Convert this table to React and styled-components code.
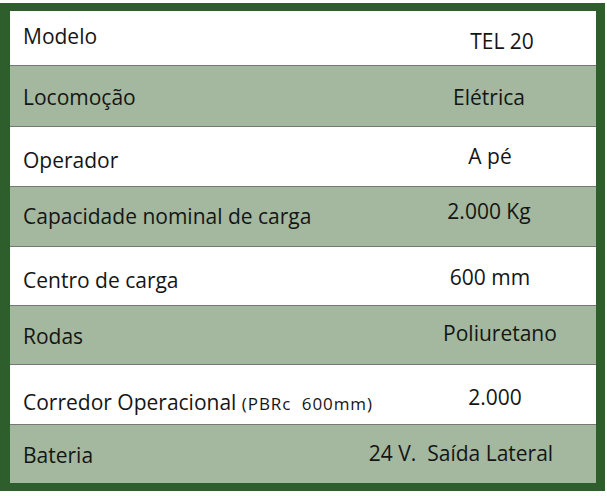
import React from "react";
import styled, { createGlobalStyle } from "styled-components";

const GlobalStyle = createGlobalStyle`
  html, body {
    margin: 0;
    padding: 0;
    background: #ffffff;
  }
  body {
    font-family: "Open Sans", "Liberation Sans", sans-serif;
    color: #151515;
  }
`;

const Frame = styled.div`
  box-sizing: border-box;
  width: 605px;
  margin-top: 3px;
  border-style: solid;
  border-color: #2e5e2b;
  border-width: 8px 9px 8px 10px;
  display: grid;
  grid-template-rows: 54px 61px 60px 60px 59px 59px 60px 59px;
`;

const Row = styled.div`
  box-sizing: border-box;
  display: grid;
  grid-template-columns: 1fr 212px;
  background: ${(p) => (p.$shaded ? "#a3b89e" : "#ffffff")};
  border-top: ${(p) => (p.$first ? "none" : "1px solid #767876")};
`;

const Label = styled.div`
  align-self: end;
  padding: 0 0 ${(p) => p.$pb}px 13px;
  font-size: 21px;
  line-height: 1;
  white-space: pre;
`;

const Note = styled.span`
  font-size: 17px;
  letter-spacing: 0.9px;
`;

const Value = styled.div`
  align-self: end;
  display: flex;
  justify-content: center;
  padding-bottom: ${(p) => p.$pb}px;
  font-size: 21px;
  line-height: 1;
  white-space: pre;
`;

const ValueText = styled.span`
  transform: translateX(${(p) => p.$shift}px);
`;

const specs = [
  { label: "Modelo", value: "TEL 20", lb: 20, vb: 15, shift: 12 },
  { label: "Locomoção", value: "Elétrica", lb: 20, vb: 20, shift: -1 },
  { label: "Operador", value: "A pé", lb: 17, vb: 21, shift: 0 },
  { label: "Capacidade nominal de carga", value: "2.000 Kg", lb: 21, vb: 26, shift: -1 },
  { label: "Centro de carga", value: "600 mm", lb: 16, vb: 19, shift: 0 },
  { label: "Rodas", value: "Poliuretano", lb: 19, vb: 22, shift: 10 },
  {
    label: "Corredor Operacional ",
    note: "(PBRc  600mm)",
    value: "2.000",
    lb: 13,
    vb: 18,
    shift: 5,
  },
  { label: "Bateria", value: "24 V.  Saída Lateral", lb: 19, vb: 21, shift: -29 },
];

const App = () => (
  <>
    <GlobalStyle />
    <Frame>
      {specs.map((s, i) => (
        <Row key={s.label} $first={i === 0} $shaded={i % 2 === 1}>
          <Label $pb={s.lb - 2}>
            {s.label}
            {s.note && <Note>{s.note}</Note>}
          </Label>
          <Value $pb={s.vb - 2}>
            <ValueText $shift={s.shift}>{s.value}</ValueText>
          </Value>
        </Row>
      ))}
    </Frame>
  </>
);

export default App;
